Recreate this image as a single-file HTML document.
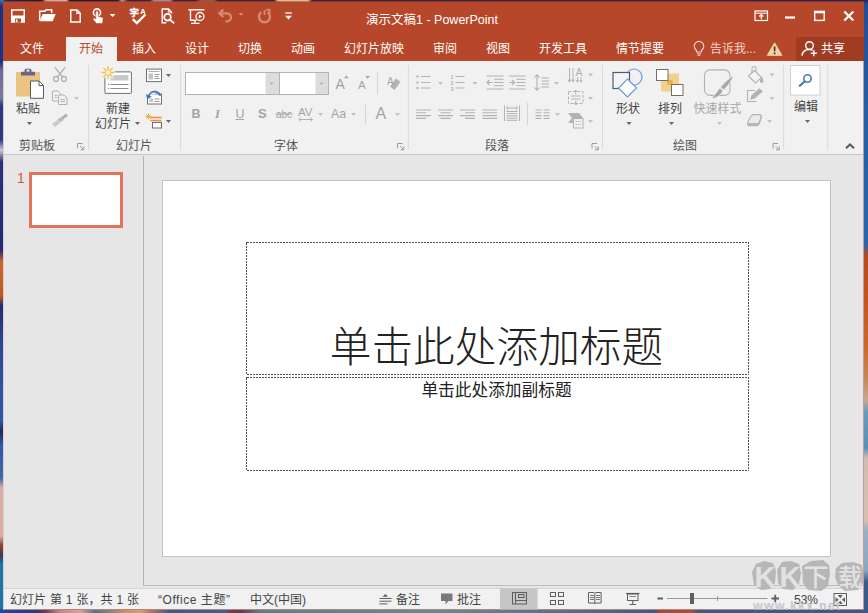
<!DOCTYPE html>
<html lang="zh-CN">
<head>
<meta charset="utf-8">
<title>演示文稿1 - PowerPoint</title>
<style>
*{box-sizing:border-box;margin:0;padding:0}
html,body{width:868px;height:613px;overflow:hidden}
body{position:relative;font-family:"Liberation Sans","Noto Sans CJK SC",sans-serif;font-size:12px;color:#444;background:#2a3a6a}
.abs{position:absolute}
#desk-top{left:0;top:0;width:868px;height:3px;background:linear-gradient(90deg,#3a7a8a 0,#1a2a6a 6px,#2a1a30 30px,#2a1a30 42px,#c8a0a8 46px,#d8b0b0 66px,#2a1a30 70px,#2a1a30 118px,#b8a0a8 122px,#3a2238 128px,#3a2238 150px,#9a88a8 154px,#9a88a8 170px,#3a2238 174px,#3a2238 196px,#8a5a4a 200px,#8a5a4a 214px,#3a2238 218px,#3a2238 274px,#d8c098 278px,#d8c098 308px,#3a2238 312px,#3a2040 600px,#2a2050 868px)}
#desk-left{left:0;top:0;width:4px;height:613px;background:linear-gradient(180deg,#3a7a8a 0,#1a3388 6px,#1a3388 62px,#6a6a9a 70px,#7a7aa0 98px,#2a3a8a 106px,#2a3a8a 140px,#c8c8d8 150px,#2a3080 162px,#1c2c78 250px,#c86a2a 262px,#b85a2a 296px,#1c2c78 306px,#2a4a98 345px,#2a5aa8 420px,#1a2a60 432px,#2a5aa8 445px,#3a6ab0 478px,#d8b0a8 488px,#d8b0a8 536px,#8a4a2a 545px,#3a3a5a 556px,#1878a8 564px,#1878a8 613px)}
#desk-right{left:863px;top:0;width:5px;height:613px;background:linear-gradient(180deg,#2a2050 0,#1f4f9a 4px,#2460a8 120px,#2a66ac 244px,#b8481c 256px,#c8541c 300px,#cc6a2a 350px,#c88a5a 380px,#c8a890 400px,#6a9ab8 412px,#5a90b8 448px,#d0bcb0 458px,#d8c0b0 520px,#9ab0c4 530px,#8aa6c0 570px,#3a5a8a 582px,#3a5a8a 613px)}
#desk-bottom{left:0;top:609px;width:868px;height:4px;background:linear-gradient(90deg,#1a4aa0 0,#1d3f86 35px,#6a3a5a 45px,#c08a8a 60px,#d8a0a0 80px,#4a7a8a 95px,#c8906a 125px,#d8a070 140px,#b07a6a 150px,#3a5a8a 170px,#40608a 225px,#7a3a4a 232px,#5a3a5a 240px,#5a808c 260px,#668a96 440px,#4a6a88 600px,#3a5a88 655px,#a04a3a 660px,#a8503a 690px,#3a5a88 700px,#3a5a8a 868px)}
#win{left:3px;top:2px;width:861px;height:608px;background:#e6e6e6;overflow:hidden}
#titlebar{left:0;top:0;width:861px;height:59px;background:#b7472a}
.tab{position:absolute;top:39px;height:16px;line-height:16px;font-size:12px;color:#fff;white-space:nowrap}
#tab-home{left:63px;top:35px;width:51px;height:24px;background:#f1f1f1}
#ribbon{left:0;top:59px;width:861px;height:94px;background:#f1f1f1;border-bottom:1px solid #c8c8c8}
.lbl{position:absolute;font-size:12px;line-height:14px;color:#444;white-space:nowrap}
.glbl{position:absolute;font-size:12px;line-height:14px;color:#555;white-space:nowrap;top:79px}
.dis{color:#a6a6a6}
.gsep{position:absolute;top:5px;width:1px;height:84px;background:#d8d8d8}
.ssep{position:absolute;width:1px;background:#d0d0d0}
.arr{position:absolute;width:0;height:0;border-left:3px solid transparent;border-right:3px solid transparent;border-top:3px solid #666}
.arr.d{border-top-color:#b8b8b8}
svg{position:absolute;overflow:visible}
#panel{left:0;top:153px;width:141px;height:433px;background:#e6e6e6}
#work{left:140px;top:154px;width:721px;height:430px;background:#e6e6e6;border-left:1px solid #b4b4b4;border-bottom:1px solid #bcbcbc}
#slide{left:160px;top:179px;width:667px;height:375px;background:#fff;box-shadow:0 0 0 1px #c2c2c2}
.ph{position:absolute;border:1px dotted #555}
#status{left:0;top:586px;width:861px;height:22px;background:#f1f1f1;border-top:1px solid #d4d4d4}
.st{position:absolute;top:3px;font-size:12px;line-height:16px;color:#444;white-space:nowrap}
</style>
</head>
<body>
<div id="desk-top" class="abs"></div>
<div class="abs" style="left:3px;top:1px;width:861px;height:1px;background:rgba(183,71,42,.62)"></div>
<div id="desk-left" class="abs"></div>
<div id="desk-right" class="abs"></div>
<div id="desk-bottom" class="abs"></div>

<div id="win" class="abs">
  <div id="titlebar" class="abs">
    <!--QAT-->
    <!--TITLE-->
    <div class="abs" style="left:363px;top:9px;font-size:12.5px;line-height:18px;color:#fff;white-space:nowrap">演示文稿1 - PowerPoint</div>
    <!--WINBTNS-->
    <!--TABS-->
    <div id="tab-home" class="abs"></div>
    <div class="tab" style="left:17px">文件</div>
    <div class="tab" style="left:76px;color:#b7472a">开始</div>
    <div class="tab" style="left:129px">插入</div>
    <div class="tab" style="left:182px">设计</div>
    <div class="tab" style="left:235px">切换</div>
    <div class="tab" style="left:288px">动画</div>
    <div class="tab" style="left:341px">幻灯片放映</div>
    <div class="tab" style="left:430px">审阅</div>
    <div class="tab" style="left:483px">视图</div>
    <div class="tab" style="left:536px">开发工具</div>
    <div class="tab" style="left:613px">情节提要</div>
    <div class="tab" style="left:707px;color:#f3d6cc">告诉我...</div>
    <div class="abs" style="left:793px;top:35px;width:68px;height:24px;background:#a03c22"></div>
    <div class="tab" style="left:818px">共享</div>
  </div>

  <div id="ribbon" class="abs">
    <!--RIBBON-->
  </div>

  <div id="panel" class="abs">
    <div class="abs" style="left:14px;top:15px;font-size:14px;line-height:16px;color:#d2573a">1</div>
    <div class="abs" style="left:26px;top:17px;width:94px;height:56px;background:#fff;border:3px solid #e5735a"></div>
  </div>
  <div id="work" class="abs"></div>
  <div id="slide" class="abs">
            <div class="abs" style="left:82px;top:139px;width:503px;text-align:center;font-size:41.7px;line-height:56px;font-weight:300;color:#222;white-space:nowrap">单击此处添加标题</div>
    <div class="abs" style="left:82px;top:199px;width:503px;text-align:center;font-size:16.7px;line-height:22px;color:#222;white-space:nowrap">单击此处添加副标题</div>
  </div>

  <div id="status" class="abs">
    <div class="st" style="left:7px;word-spacing:.6px">幻灯片 第 1 张，共 1 张</div>
    <div class="st" style="left:155px;letter-spacing:.55px">“Office 主题”</div>
    <div class="st" style="left:247px">中文(中国)</div>
    <div class="st" style="left:393px">备注</div>
    <div class="st" style="left:454px">批注</div>
    <div class="st" style="left:791px">53%</div>
    <!--STATUSICONS-->
  </div>
  <div class="abs" style="left:860px;top:59px;width:1px;height:549px;background:#b8a098"></div><div class="abs" style="left:0;top:607px;width:861px;height:1px;background:#b8847a"></div><div class="abs" style="left:0;top:59px;width:1px;height:549px;background:#e8c8c0"></div>
</div>

<div id="ov" class="abs" style="left:0;top:0;width:868px;height:613px;pointer-events:none">
<svg id="ico" width="868" height="613" viewBox="0 0 868 613" style="left:0;top:0">

<g id="qat" fill="none" stroke="#fff" stroke-width="1.5">
<!-- save -->
<rect x="11.75" y="10" width="12.5" height="12" />
<rect x="12" y="15.5" width="12" height="6.5" fill="#fff" stroke="none"/>
<rect x="15" y="18.5" width="6" height="4" fill="#b7472a" stroke="none"/>
<rect x="15.8" y="19.5" width="1.7" height="2.5" fill="#fff" stroke="none"/>
<!-- open folder -->
<path d="M39.7 20.5V11.3h5l1.5-1.5h5.5v3.2" />
<path d="M39.5 21.3l3.2-7.3h13l-3 7.3z" fill="#fff" stroke="none"/>
<!-- new doc -->
<path d="M70.75 10v12h9.5V13.2l-3.2-3.2z" stroke-linejoin="miter"/>
<path d="M76.8 10.2v3.2h3.3" stroke-width="1.2"/>
<!-- touch -->
<circle cx="97" cy="12.5" r="3.6" stroke-width="1.6"/>
<path d="M95.8 12v7l-1.6-1.2-1.4 1.2 3.6 4.6h6.2l.6-6-4.8-1.2V12a1.3 1.3 0 0 0-2.6 0z" fill="#fff" stroke="#b7472a" stroke-width=".6"/>
<path d="M109.5 14h6l-3 3z" fill="#fff" stroke="none"/>
</g>

<g id="qat2" fill="none" stroke="#fff" stroke-width="1.5">
<!-- spell -->
<text x="129.400" y="16.300" font-size="9.500" fill="#fff" stroke="#fff" stroke-width=".35" font-family="'Liberation Sans','Noto Sans CJK SC',sans-serif" font-weight="700">字</text>
<text x="140.300" y="14.200" font-size="7.500" fill="#fff" stroke="none" font-family="'Liberation Sans',sans-serif" font-weight="700">A</text>
<path d="M132.800 19.200l4 3.900 8.600-8.600" stroke-width="2.400"/>
<!-- print preview -->
<path d="M171.5 13.5V12l-3-3h-6.3v13.7h4" stroke-width="1.4"/>
<path d="M168.3 9.2v3h3" stroke-width="1"/>
<circle cx="167.500" cy="17.200" r="3.300" stroke-width="1.800"/>
<path d="M169.8 19.6l4.4 3.8" stroke-width="1.8"/>
<!-- slideshow -->
<path d="M188.3 9.8h16" stroke-width="1.4"/>
<path d="M190.5 10v10.3h6" stroke-width="1.4"/>
<path d="M195 20.5v3M191 23.4h8.5" stroke-width="1.3"/>
<circle cx="200" cy="16.5" r="4" stroke-width="1.3" fill="#b7472a"/>
<path d="M198.8 14.4v4.2l3.4-2.1z" fill="#fff" stroke="none"/>
<!-- undo dim -->
<g stroke="#d68a72">
<path d="M219.500 13.300h7.500a4 4 0 0 1 0 8h-1.500" stroke-width="2.200"/>
<path d="M223.300 9.600l-4 3.700 4 3.700" stroke-width="2.200"/>
<path d="M238.500 13h5l-2.500 2.800z" fill="#d68a72" stroke="none"/>
<path d="M261.300 12.300a5.500 5.500 0 1 0 6.400 0" stroke-width="2.400"/>
<path d="M264.500 10v5" stroke-width="1.800"/>
<path d="M266 9.600h3.600v3.800" stroke-width="1.800"/>
</g>
<!-- customize -->
<path d="M285.300 13h6.500" stroke-width="1.300"/>
<path d="M285 15.800h7l-3.500 3.800z" fill="#fff" stroke="none"/>
</g>
<g id="winbtns" fill="none" stroke="#fff">
<rect x="755" y="11" width="12.500" height="9.500" stroke-width="1.200"/>
<path d="M755 13.200h12.500" stroke-width="1"/>
<path d="M761.300 19.300v-4.500M759.300 16.500l2-2 2 2" stroke-width="1.200"/>
<path d="M785 17.500h10" stroke-width="2.200"/>
<rect x="814.700" y="11.700" width="9.500" height="8.700" stroke-width="1.400"/>
<path d="M814 12h11" stroke-width="2.600"/>
<path d="M844.300 11.500l9 9M853.300 11.500l-9 9" stroke-width="2.200"/>
</g>
<g id="tabicons" fill="none">
<!-- lightbulb -->
<path d="M696.500 50.500c-1.500-1.500-2.300-2.600-2.300-4.300a4.800 4.800 0 0 1 9.600 0c0 1.700-.8 2.800-2.300 4.300v1.500h-5z" stroke="#f3d6cc" stroke-width="1.100"/>
<path d="M697 53.800h4M697.500 55.300h3" stroke="#f3d6cc" stroke-width="1"/>
<!-- warning -->
<path d="M774.600 42.800l7.300 12.500h-14.600z" fill="#f0d3a4" stroke="#f0d3a4" stroke-width="1" stroke-linejoin="round"/>
<path d="M774.600 46.500v4.800M774.600 52.600v1.600" stroke="#4a3a2a" stroke-width="1.700"/>
<!-- share person -->
<circle cx="809.500" cy="45.500" r="3.800" stroke="#fff" stroke-width="1.400"/>
<path d="M802 55.800c.3-4 3-6.300 7.500-6.300 1.300 0 2.300.2 3.200.6" stroke="#fff" stroke-width="1.400"/>
<path d="M813.800 50.300v6M810.800 53.300h6" stroke="#fff" stroke-width="1.400"/>
</g>
<!--QATICONS-->
<rect x="88.1" y="65" width="1" height="84.500" fill="#dadada"/>
<rect x="180.1" y="65" width="1" height="84.500" fill="#dadada"/>
<rect x="407.9" y="65" width="1" height="84.500" fill="#dadada"/>
<rect x="602.0" y="65" width="1" height="84.500" fill="#dadada"/>
<rect x="783.1" y="65" width="1" height="84.500" fill="#dadada"/>
<rect x="827.2" y="65" width="1" height="84.500" fill="#dadada"/>
<rect x="377" y="72.500" width="1" height="22" fill="#d4d4d4"/>
<rect x="365" y="104.500" width="1" height="20" fill="#d4d4d4"/>
<rect x="527" y="103" width="1" height="22" fill="#d4d4d4"/>
<g id="paste">
<rect x="16" y="72" width="24" height="24.500" fill="#eac282"/>
<path d="M21 75.600v-3.800h3.500v-1.300a3.500 2 0 0 1 7 0v1.300h3.500v3.800z" fill="#6a6580"/>
<rect x="26.600" y="69.600" width="2.800" height="2" fill="#f6ecdc"/>
<path d="M30.500 81h8.500l4.500 4.500v12.800h-13z" fill="#fff" stroke="#5a5a5a" stroke-width="1"/>
<path d="M39 81v4.500h4.500" fill="none" stroke="#5a5a5a" stroke-width="1"/>
</g>
<path d="M27 122h5l-2.5 3z" fill="#666" stroke="none"/>
<g fill="none" stroke="#b2b2b2" stroke-width="1.300">
<path d="M55 67.500l8 10M65 67.500l-8 10"/>
<circle cx="56" cy="79" r="2.500"/><circle cx="64" cy="79" r="2.500"/>
</g>
<g fill="#f1f1f1" stroke="#b2b2b2" stroke-width="1">
<path d="M52.500 91h5.500l2.500 2.500v7.500h-8z"/>
<path d="M58.500 95h5.500l3 3v6.500h-8.500z"/>
<path d="M60.500 99.500h4.500M60.500 101.500h4.500" />
<path d="M54.500 95.500h2.500M54.500 97.500h2.500" />
</g>
<path d="M74 97h5l-2.5 3z" fill="#c4c4c4" stroke="none"/>
<g fill="#b2b2b2" stroke="none">
<path d="M61 117.500l5-4 2 2.300-5 4z"/>
<path d="M57.500 119.500l3.500-2.500 2.500 3-3.500 2.500z" opacity=".85"/>
<path d="M52 124l5.500-4 2.500 3-5 4z" opacity=".6"/>
</g>
<path d="M77.5 148.5V143.5h5" stroke="#9c9c9c" stroke-width="1" fill="none"/><path d="M80 146l3.300 3.300M83.8 146.5v3.300h-3.300" stroke="#9c9c9c" stroke-width="1" fill="none"/>
<g id="newslide">
<rect x="104.900" y="71.900" width="26.500" height="21.500" rx="1" fill="#fff" stroke="#6e6e6e" stroke-width="1"/>
<rect x="110.500" y="75" width="18" height="5.500" fill="#c8c8c8"/>
<path d="M110.500 84.500h18M110.500 88.500h18" stroke="#8a8a8a" stroke-width="1"/>
<path d="M108 84.500h1.200M108 88.500h1.200" stroke="#8a8a8a" stroke-width="1"/>
<g stroke="#f1f1f1" stroke-width="3.200" stroke-linecap="round"><path d="M108 66.500v12M102 72.500h12M103.800 68.300l8.400 8.400M112.200 68.300l-8.400 8.400"/></g>
<g stroke="#f0c050" stroke-width="1.300"><path d="M108 66v13M101.500 72.500h13M103.400 67.900l9.200 9.200M112.600 67.900l-9.200 9.200"/></g>
<circle cx="108" cy="72.500" r="2.800" fill="#fdf0c0" stroke="#f0c050" stroke-width=".8"/>
</g>
<path d="M135 122h5l-2.5 3z" fill="#666" stroke="none"/>
<g id="layout">
<rect x="146.500" y="69.100" width="15" height="12.500" fill="#fff" stroke="#6e6e6e" stroke-width="1"/>
<path d="M148.500 71.500h11" stroke="#b0b0b0" stroke-width="1"/>
<rect x="148.500" y="73.500" width="4.500" height="6" fill="#c2c2c2"/>
<path d="M154.500 74.500h5M154.500 76.500h4M154.500 78.500h5" stroke="#9a9a9a" stroke-width="1"/>
</g>
<path d="M166 74h5l-2.5 3z" fill="#666" stroke="none"/>
<g id="reset">
<rect x="147.500" y="94" width="14" height="10" fill="#fff" stroke="#6e6e6e" stroke-width="1"/>
<rect x="149.500" y="98.500" width="3.500" height="3.500" fill="#c2c2c2"/>
<path d="M154.500 99h5M154.500 101.500h5" stroke="#9a9a9a" stroke-width="1"/>
<path d="M146.500 91.500h9v3h-6.500v4h-2.500z" fill="#f1f1f1"/>
<path d="M148.800 96.500c.5-3.500 3.500-5.200 6.500-4.800 2.500.3 4.300 2 5 4" fill="none" stroke="#3f77be" stroke-width="1.800"/>
<path d="M146 94l1.200 5.300 4.600-2.600z" fill="#3f77be"/>
</g>
<g id="section">
<path d="M150.500 117.500h11M150.500 120.500h11" stroke="#e8913a" stroke-width="1.600"/>
<rect x="152.500" y="122.500" width="9" height="5.500" fill="#fff" stroke="#6e6e6e" stroke-width="1"/>
<g stroke="#eeb33a" stroke-width="1"><path d="M148.500 113.500v6M145.500 116.500h6M146.400 114.400l4.200 4.200M150.600 114.400l-4.200 4.200"/></g>
</g>
<path d="M166 120h5l-2.5 3z" fill="#666" stroke="none"/>
<g id="fontboxes">
<rect x="185.500" y="72.500" width="93.500" height="22" fill="#fff" stroke="#b4b4b4" stroke-width="1"/>
<rect x="265.500" y="73" width="13" height="21" fill="#dcdcdc"/>
<rect x="279.500" y="72.500" width="49" height="22" fill="#fff" stroke="#b4b4b4" stroke-width="1"/>
<rect x="315.500" y="73" width="12.500" height="21" fill="#dcdcdc"/>
</g>
<path d="M269.5 82.5h4l-2.0 2.5z" fill="#b0b0b0" stroke="none"/>
<path d="M319.5 82.5h4l-2.0 2.5z" fill="#b0b0b0" stroke="none"/>
<g fill="#a4a4a4" font-family="'Liberation Sans',sans-serif">
<text x="335.500" y="89" font-size="14">A</text>
<path d="M344 78.300h4.600l-2.300-2.800z"/>
<text x="358" y="89" font-size="11.500">A</text>
<path d="M365.300 76h4.600l-2.300 2.800z"/>
<text x="191.500" y="117.500" font-size="12.500" font-weight="700">B</text>
<text x="215" y="117.500" font-size="12.500" font-style="italic" font-family="'Liberation Serif',serif" font-weight="700">I</text>
<text x="235.500" y="117.500" font-size="12.500">U</text>
<rect x="235.500" y="119" width="8.500" height="1"/>
<text x="258" y="118" font-size="13" font-weight="700">S</text>
<text x="276" y="117.500" font-size="10">abc</text>
<rect x="275.500" y="113.500" width="17" height="1"/>
<text x="298" y="115.500" font-size="10.500" textLength="14.500" lengthAdjust="spacingAndGlyphs">AV</text>
<path d="M299 119.500h13.500M301 117.500l-2 2 2 2M310.500 117.500l2 2-2 2" fill="none" stroke="#b2b2b2" stroke-width="1"/>
<text x="331" y="118" font-size="13" textLength="15" lengthAdjust="spacingAndGlyphs">Aa</text>
<text x="375.500" y="119" font-size="16">A</text>
<text x="387" y="85" font-size="10">A</text>
<path d="M390 86.500l6-8 4.500 3.500-6 8z" opacity=".8"/>
</g>
<path d="M318 113h5l-2.5 3z" fill="#c0c0c0" stroke="none"/>
<path d="M351 113h5l-2.5 3z" fill="#c0c0c0" stroke="none"/>
<path d="M395 113h5l-2.5 3z" fill="#c0c0c0" stroke="none"/>
<path d="M397.5 148.5V143.5h5" stroke="#9c9c9c" stroke-width="1" fill="none"/><path d="M400 146l3.300 3.300M403.8 146.5v3.300h-3.300" stroke="#9c9c9c" stroke-width="1" fill="none"/>
<g fill="#b2b2b2"><rect x="416.500" y="75.500" width="2" height="2"/><rect x="416.500" y="81.500" width="2" height="2"/><rect x="416.500" y="87" width="2" height="2"/></g>
<path d="M421 76.500h9.500M421 82.500h9.500M421 88h9.500" stroke="#b2b2b2" stroke-width="1.200"/>
<path d="M438 82h5l-2.5 3z" fill="#c0c0c0" stroke="none"/>
<g fill="#b2b2b2" font-family="'Liberation Sans',sans-serif" font-size="5.500" font-weight="700"><text x="450.500" y="78.500">1</text><text x="450.500" y="84.500">2</text><text x="450.500" y="90.500">3</text></g>
<path d="M455.500 76.500h9M455.500 82.500h9M455.500 88h9" stroke="#b2b2b2" stroke-width="1.200"/>
<path d="M472.5 82h5l-2.5 3z" fill="#c0c0c0" stroke="none"/>
<path d="M486.500 76h17M494 79.300h9.500M494 82.500h9.500M494 85.700h9.500M486.500 89h17" stroke="#b2b2b2" stroke-width="1"/>
<path d="M487 82.500h5.500M489.500 80l-2.500 2.500 2.500 2.500" stroke="#b2b2b2" stroke-width="1.200" fill="none"/>
<path d="M509 76h16.500M516.500 79.300h9M516.500 82.500h9M516.500 85.700h9M509 89h16.500" stroke="#b2b2b2" stroke-width="1"/>
<path d="M509 82.500h5.500M512 80l2.500 2.500-2.500 2.500" stroke="#b2b2b2" stroke-width="1.200" fill="none"/>
<path d="M537 75v15M534.500 77.500l2.500-2.700 2.500 2.700M534.500 87.500l2.500 2.700 2.500-2.700" stroke="#b2b2b2" stroke-width="1.100" fill="none"/>
<path d="M541.500 78h7.500M541.500 81h7.500M541.500 84h7.500M541.500 87h7.500" stroke="#b2b2b2" stroke-width="1"/>
<path d="M554 82h5l-2.5 3z" fill="#c0c0c0" stroke="none"/>
<path d="M569.500 68v14M573 68v14M568 79.500l1.500 2.500 1.500-2.500M571.500 79.500l1.500 2.500 1.500-2.500" stroke="#b2b2b2" stroke-width="1" fill="none"/>
<text x="575.500" y="76" font-size="10.500" fill="#b2b2b2" font-family="'Liberation Sans',sans-serif">A</text>
<path d="M577.500 77v5M581 77v5M576.200 80l1.300 2.300 1.300-2.300M579.700 80l1.300 2.300 1.300-2.300" stroke="#b2b2b2" stroke-width=".9" fill="none"/>
<path d="M588 73.5h5l-2.5 3z" fill="#c0c0c0" stroke="none"/>
<rect x="568.500" y="91.500" width="14.500" height="12" fill="none" stroke="#b2b2b2" stroke-width="1" stroke-dasharray="3 1.500"/>
<path d="M571 96h9.500M571 99h9.500" stroke="#b2b2b2" stroke-width="1"/>
<path d="M575.800 90v4.500M574 91.800l1.800-1.800 1.800 1.800M575.800 100.500v4.500M574 103.200l1.800 1.800 1.800-1.800" stroke="#b2b2b2" stroke-width="1" fill="none"/>
<path d="M588 97h5l-2.5 3z" fill="#c0c0c0" stroke="none"/>
<path d="M568 113h11l4 5h-5l-4 5h-6l4-5z" fill="#b2b2b2"/>
<rect x="573.500" y="118.500" width="9.500" height="9.500" fill="#f1f1f1" stroke="#b2b2b2" stroke-width="1"/>
<path d="M575.500 121.500h5.500M575.500 124.500h5.500" stroke="#b2b2b2" stroke-width="1" stroke-dasharray="1.500 1"/>
<path d="M588 120h5l-2.5 3z" fill="#c0c0c0" stroke="none"/>
<path d="M416 110.0h15M416 112.8h10M416 115.6h15M416 118.4h10" stroke="#b2b2b2" stroke-width="1.1" fill="none"/>
<path d="M438 110.0h15M440.5 112.8h10M438 115.6h15M440.5 118.4h10" stroke="#b2b2b2" stroke-width="1.1" fill="none"/>
<path d="M460 110.0h15M465 112.8h10M460 115.6h15M465 118.4h10" stroke="#b2b2b2" stroke-width="1.1" fill="none"/>
<path d="M482.5 110.0h14.5M482.5 112.8h14.5M482.5 115.6h14.5M482.5 118.4h14.5" stroke="#b2b2b2" stroke-width="1.1" fill="none"/>
<path d="M504.500 105.500v15.500M519.500 105.500v15.500" stroke="#b2b2b2" stroke-width="1"/>
<path d="M506.500 108h11M508.300 106.300l-1.800 1.700 1.800 1.700M515.700 106.300l1.800 1.700-1.800 1.700" stroke="#b2b2b2" stroke-width="1" fill="none"/>
<path d="M506.500 111.500h11M506.500 113.700h11M506.500 115.900h11M506.500 118.100h11M506.500 120.300h11" stroke="#b2b2b2" stroke-width="1"/>
<path d="M535.500 110h6M535.500 112.800h6M535.500 115.600h6M535.500 118.400h6M543.500 110h6M543.500 112.800h6M543.500 115.600h6M543.500 118.400h6" stroke="#b2b2b2" stroke-width="1.100"/>
<path d="M555 113h5l-2.5 3z" fill="#c0c0c0" stroke="none"/>
<path d="M592.0 148.5V143.5h5" stroke="#9c9c9c" stroke-width="1" fill="none"/><path d="M594.5 146l3.300 3.300M598.3 146.5v3.300h-3.300" stroke="#9c9c9c" stroke-width="1" fill="none"/>
<g id="shapes" stroke-width="1.200">
<circle cx="634" cy="77" r="8" stroke="#6a9bd4" fill="#f1f1f1"/>
<rect x="613" y="72.500" width="16.500" height="16" stroke="#4a5a78" fill="#f3f4f6"/>
<path d="M627.500 79l9 9-9 9-9-9z" stroke="#6a9bd4" fill="#fff"/>
</g>
<path d="M626.5 122h5l-2.5 3z" fill="#666" stroke="none"/>
<g id="arrange">
<rect x="667" y="73.500" width="12" height="11.500" fill="#f3d08e"/>
<rect x="661" y="80" width="11.500" height="11.500" fill="#f3d08e"/>
<rect x="667" y="80" width="5.500" height="5" fill="#e8b052"/>
<rect x="656.500" y="69.500" width="11.500" height="11" fill="#fff" stroke="#6e6e6e" stroke-width="1"/>
<rect x="671.500" y="84.500" width="11.500" height="11" fill="#fff" stroke="#6e6e6e" stroke-width="1"/>
</g>
<path d="M669 122h5l-2.5 3z" fill="#666" stroke="none"/>
<g id="qstyle">
<rect x="704.500" y="69.900" width="25.500" height="25.500" rx="5.500" fill="#f1f1f1" stroke="#b2b2b2" stroke-width="1.100"/>
<path d="M733.500 75.500c-1.500 5-5.500 10.500-10 14.500l-3-3c4-4.500 8.500-8.800 13-11.500z" fill="#a8a8a8" stroke="#f1f1f1" stroke-width=".8"/>
<path d="M719.800 87.800l3 3c-1.500 4.500-5.500 7.300-12 8 3.500-2.800 5.500-6.500 9-11z" fill="#a8a8a8" stroke="#f1f1f1" stroke-width=".8"/>
</g>
<path d="M717 122h5l-2.5 3z" fill="#c0c0c0" stroke="none"/>
<g fill="none" stroke="#b2b2b2" stroke-width="1.100">
<path d="M754.500 70.500l7 7-6 5.500-7-7z" fill="#f4f4f4"/>
<path d="M752 73v-4.500a2 2 0 0 1 4 0v3"/>
<path d="M761.500 77.500c1.500 2 2 3.500 1 4.500-1 .8-2 0-2-1z" fill="#b2b2b2"/>
</g>
<path d="M769.5 73.5h5l-2.5 3z" fill="#c0c0c0" stroke="none"/>
<g fill="none" stroke="#b2b2b2" stroke-width="1.100">
<path d="M755 90.500h-7.500v11h9"/>
<path d="M751 99l1-3.500 7.500-6.500 2.500 2.500-7.500 6.500z" fill="#b2b2b2"/>
</g>
<path d="M769.5 97h5l-2.5 3z" fill="#c0c0c0" stroke="none"/>
<g fill="none" stroke="#b2b2b2" stroke-width="1.100" stroke-linejoin="round">
<path d="M749 125.800c-1.200 0-1.800-.900-1.200-2l3.200-6.800c.6-1.200 1.600-2 3-2h5.800c1.400 0 2 .9 1.600 2.200l-2.200 6.600c-.4 1.200-1.400 2-2.800 2z" fill="#bcbcbc"/>
<path d="M749.300 123.600c-1.200 0-1.800-.900-1.200-2l2.700-5c.6-1.200 1.600-2 3-2h5.800c1.400 0 2 .9 1.600 2.200l-1.700 4.800c-.4 1.200-1.400 2-2.800 2z" fill="#ececec"/>
</g>
<path d="M767 120h5l-2.5 3z" fill="#c0c0c0" stroke="none"/>
<path d="M773.0 148.5V143.5h5" stroke="#9c9c9c" stroke-width="1" fill="none"/><path d="M775.5 146l3.300 3.300M779.3 146.5v3.300h-3.300" stroke="#9c9c9c" stroke-width="1" fill="none"/>
<g id="editing">
<rect x="790.500" y="65.500" width="29.500" height="29.500" fill="#fff" stroke="#d0d0d0" stroke-width="1"/>
<circle cx="807.500" cy="78.500" r="3.700" fill="none" stroke="#4a7ab5" stroke-width="1.600"/>
<path d="M804.800 81.300l-5 4.500" stroke="#4a7ab5" stroke-width="2.200" stroke-linecap="round"/>
</g>
<path d="M805 120h5l-2.5 3z" fill="#666" stroke="none"/>
<path d="M846 148.300l4-3.800 4 3.800" stroke="#5a5a5a" stroke-width="2" fill="none"/>
<g id="ph" fill="none" stroke="#505050" stroke-width="1" stroke-dasharray="2 1" shape-rendering="crispEdges">
<rect x="246.500" y="242.500" width="502" height="132"/>
<rect x="246.500" y="377.500" width="502" height="93"/>
</g>
<!--RIBBONICONS-->
<rect x="500" y="588" width="37.500" height="21.500" fill="#c6c6c6"/>
<path d="M385.300 594l2.800 2.800h-5.600z" fill="#5f5f5f"/>
<path d="M379.500 598.500h12M379.500 601.200h12M379.500 603.900h8" stroke="#5f5f5f" stroke-width="1"/>
<path d="M441 593.500h11.500v7.500h-4l-3 3.500v-3.500h-4.500z" fill="#7a7a7a"/>
<rect x="512.500" y="592.500" width="14" height="11.500" fill="none" stroke="#5f5f5f" stroke-width="1"/>
<path d="M515.500 592.500v11.500" stroke="#5f5f5f" stroke-width="1"/><rect x="518.500" y="594.500" width="5.500" height="3" fill="none" stroke="#5f5f5f" stroke-width="1"/><path d="M515.500 600.500h11" stroke="#5f5f5f" stroke-width="1"/>
<rect x="550.5" y="592.5" width="5" height="4" fill="none" stroke="#5f5f5f" stroke-width="1"/>
<rect x="558.5" y="592.5" width="5" height="4" fill="none" stroke="#5f5f5f" stroke-width="1"/>
<rect x="550.5" y="600.5" width="5" height="4" fill="none" stroke="#5f5f5f" stroke-width="1"/>
<rect x="558.5" y="600.5" width="5" height="4" fill="none" stroke="#5f5f5f" stroke-width="1"/>
<path d="M588.500 592.500h5.500l.800.800.800-.800h5.500v10.500h-5.500l-.800.800-.800-.800h-5.500z" fill="none" stroke="#5f5f5f" stroke-width="1"/>
<path d="M594.800 593.500v10.500" stroke="#5f5f5f" stroke-width="1"/>
<path d="M590 595.500h3.500M590 597.500h3.500M590 599.500h3.500M596 595.500h3.500M596 597.500h3.500M596 599.500h3.500" stroke="#7a7a7a" stroke-width="1" shape-rendering="crispEdges"/>
<path d="M626 593.500h13.500" stroke="#5f5f5f" stroke-width="1.200"/><rect x="627.500" y="594" width="10.500" height="6.500" fill="none" stroke="#5f5f5f" stroke-width="1"/><path d="M632.800 600.500v4M629.500 604.500h6.500" stroke="#5f5f5f" stroke-width="1.100"/><path d="M629.500 596.500h6.500" stroke="#8a8a8a" stroke-width="1"/>
<rect x="657.500" y="597.500" width="5.500" height="2" fill="#5f5f5f"/>
<rect x="667" y="598" width="100.500" height="1" fill="#9a9a9a"/>
<rect x="717" y="596" width="1" height="5" fill="#9a9a9a"/>
<rect x="690" y="593" width="4" height="11" fill="#5f5f5f"/>
<path d="M771.500 598.500h7.500M775.250 594.800v7.500" stroke="#5f5f5f" stroke-width="1.800"/>
<rect x="834" y="593.500" width="12.500" height="12" fill="none" stroke="#5f5f5f" stroke-width="1"/>
<path d="M837.750 595h5l-2.500 3.200zM837.750 604h5l-2.500-3.200zM835.500 597.250v5l3.200-2.500zM845 597.250v5l-3.200-2.500z" fill="#5f5f5f"/>

<g id="wm" opacity=".93">
<path d="M752 572l4-8 8-3 9 2 3 8-1 12-5 6-9 1-7-5z" fill="#b4b4b4"/>
<path d="M777 570l5-8 9-1 8 3 2 9-2 11-6 6-10-1-5-6z" fill="#b4b4b4"/>
<path d="M802 566l9-5 12-1 6 5 1 9-2 12-7 5-13-1-5-7z" fill="#b4b4b4"/>
<path d="M836 568l6-5 11-1 9 3 1 7v11l-5 7-13 1-7-6-3-8z" fill="#b4b4b4"/>
<g fill="#e2e2e2" font-family="'Liberation Sans','Noto Sans CJK SC',sans-serif" font-weight="700">
<text x="754.500" y="587" font-size="29">K</text>
<text x="779.500" y="587" font-size="29">K</text>
<text x="803.500" y="586" font-size="25" font-weight="500">下</text>
<text x="838" y="586" font-size="24" font-weight="500">载</text>
</g>
<text x="753" y="609.500" font-size="12.500" font-weight="700" fill="#c0c5ce" font-family="'Liberation Sans',sans-serif" textLength="87" lengthAdjust="spacing">www.kkx.net</text>
</g>

</svg>

<div class="lbl" style="left:16px;top:102px">粘贴</div>
<div class="lbl" style="left:19px;top:139px;color:#555">剪贴板</div>
<div class="lbl" style="left:106px;top:102px">新建</div>
<div class="lbl" style="left:95px;top:117px">幻灯片</div>
<div class="lbl" style="left:116px;top:139px;color:#555">幻灯片</div>
<div class="lbl" style="left:274px;top:139px;color:#555">字体</div>
<div class="lbl" style="left:485px;top:139px;color:#555">段落</div>
<div class="lbl" style="left:616px;top:102px">形状</div>
<div class="lbl" style="left:658px;top:102px">排列</div>
<div class="lbl dis" style="left:693.500px;top:102px">快速样式</div>
<div class="lbl" style="left:673px;top:139px;color:#555">绘图</div>
<div class="lbl" style="left:794px;top:100px">编辑</div>
<!--OVTEXT-->
</div>
</body>
</html>
